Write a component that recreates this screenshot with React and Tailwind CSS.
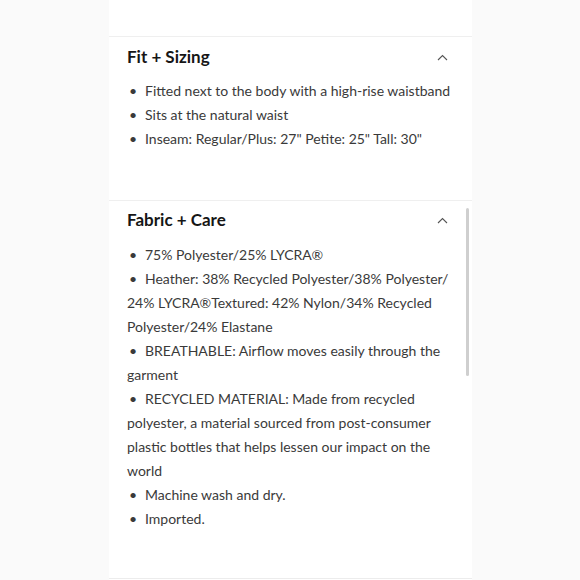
import React from "react";

const fitItems = [
  "Fitted next to the body with a high-rise waistband",
  "Sits at the natural waist",
  "Inseam: Regular/Plus: 27\" Petite: 25\" Tall: 30\"",
];

const fabricItems = [
  "75% Polyester/25% LYCRA®",
  "Heather: 38% Recycled Polyester/38% Polyester/ 24% LYCRA®Textured: 42% Nylon/34% Recycled Polyester/24% Elastane",
  "BREATHABLE: Airflow moves easily through the garment",
  "RECYCLED MATERIAL: Made from recycled polyester, a material sourced from post-consumer plastic bottles that helps lessen our impact on the world",
  "Machine wash and dry.",
  "Imported.",
];

function Chevron() {
  return (
    <svg width="11" height="7" viewBox="0 0 11 7" fill="none" className="mr-[12px]">
      <path d="M1 6 L5.5 1.5 L10 6" stroke="#555" strokeWidth="1.1" />
    </svg>
  );
}

function Section({ title, items, pt, gap, pb }) {
  return (
    <div className={`border-t border-[#efefef] pl-[18px] pr-[12px] ${pt} ${pb}`}>
      <div className="flex items-center justify-between h-[24px]">
        <h2 className="text-[17px] font-bold text-[#161616]">{title}</h2>
        <Chevron />
      </div>
      <ul className={`${gap} text-[14px] leading-[24px] text-[#3a3a3a]`}>
        {items.map((t) => (
          <li key={t}>
            <span className="inline-block w-[18px] pl-[2px]">•</span>
            {t}
          </li>
        ))}
      </ul>
    </div>
  );
}

export default function App() {
  return (
    <div className="w-[580px] h-[580px] bg-[#fafafa] flex justify-center overflow-hidden" style={{ fontFamily: "Lato, 'Open Sans', sans-serif" }}>
      <div className="w-[363px] ml-[1px] bg-white pt-[36px] relative">
        <Section title="Fit + Sizing" items={fitItems} pt="pt-[8px]" gap="mt-[10px]" pb="pb-[49px]" />
        <Section title="Fabric + Care" items={fabricItems} pt="pt-[7px]" gap="mt-[11px]" pb="pb-[47px]" />
        <div className="border-t border-[#ececec]" />
        <div className="absolute left-[357px] top-[208px] w-[3px] h-[168px] rounded-full bg-[#cfcfcf]" />
      </div>
    </div>
  );
}
